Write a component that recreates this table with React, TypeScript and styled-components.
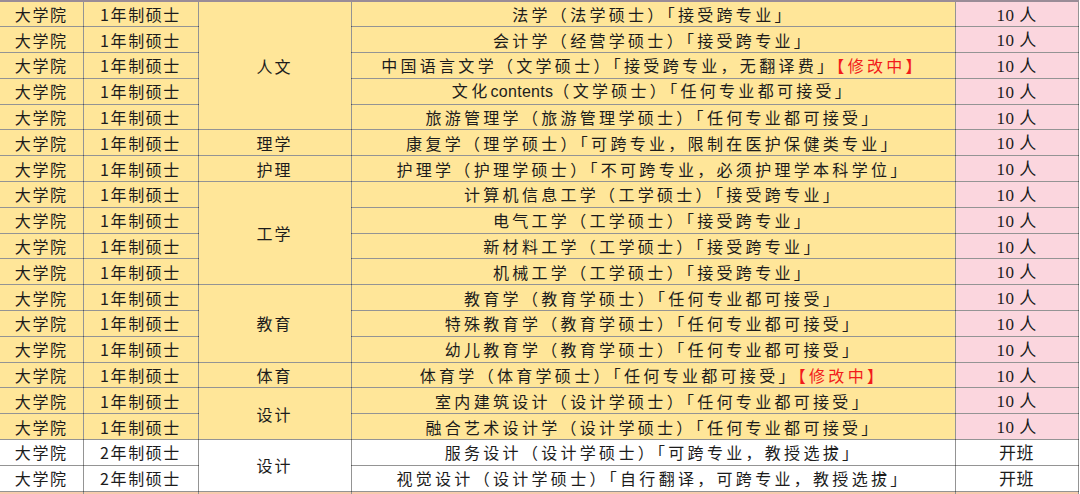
import React from "react";
import styled, { createGlobalStyle } from "styled-components";

const GlobalStyle = createGlobalStyle`
  html, body {
    margin: 0;
    padding: 0;
    background: #ffffff;
    overflow: hidden;
  }
  body {
    font-family: "Noto Sans CJK SC", "Noto Sans", sans-serif;
    color: #1c1c1c;
  }
`;

type Tone = "gold" | "white" | "peach";

const bg: Record<Tone, string> = {
  gold: "#ffe699",
  white: "#ffffff",
  peach: "#f8cbad",
};

const Sheet = styled.table`
  width: 1078px;
  table-layout: fixed;
  border-collapse: collapse;
  border-top: 2px solid #9a8c97;
`;

const Row = styled.tr<{ $tone: Tone }>`
  height: 25.8px;
  background: ${({ $tone }) => bg[$tone]};
`;

const Cell = styled.td<{ $spacing?: number }>`
  border: 1px solid rgba(0, 0, 0, 0.42);
  padding: 0;
  text-align: center;
  vertical-align: middle;
  font-size: 16px;
  line-height: 20px;
  letter-spacing: ${({ $spacing }) => $spacing ?? 1.6}px;
  white-space: nowrap;
  overflow: hidden;

  &:first-child {
    border-left: none;
  }
`;

const Quota = styled(Cell)<{ $pink: boolean }>`
  background: ${({ $pink }) => ($pink ? "#fbd6de" : "#ffffff")};
  font-family: "Liberation Serif", "Noto Sans CJK SC", serif;
  font-size: 17px;
  line-height: 16px;
  letter-spacing: 0.5px;
  padding-top: 3px;
`;

const Latin = styled.span`
  font-family: "Liberation Sans", "Noto Sans", sans-serif;
  letter-spacing: 0.3px;
`;

const Editing = styled.span`
  color: #f21b1b;
`;

interface Program {
  name: React.ReactNode;
  group?: { label: string; span: number };
  editing?: boolean;
}

const oneYear: Program[] = [
  { name: "法学（法学硕士）「接受跨专业」", group: { label: "人文", span: 5 } },
  { name: "会计学（经营学硕士）「接受跨专业」" },
  { name: "中国语言文学（文学硕士）「接受跨专业，无翻译费」", editing: true },
  {
    name: (
      <>
        文化<Latin>contents</Latin>（文学硕士）「任何专业都可接受」
      </>
    ),
  },
  { name: "旅游管理学（旅游管理学硕士）「任何专业都可接受」" },
  { name: "康复学（理学硕士）「可跨专业，限制在医护保健类专业」", group: { label: "理学", span: 1 } },
  { name: "护理学（护理学硕士）「不可跨专业，必须护理学本科学位」", group: { label: "护理", span: 1 } },
  { name: "计算机信息工学（工学硕士）「接受跨专业」", group: { label: "工学", span: 4 } },
  { name: "电气工学（工学硕士）「接受跨专业」" },
  { name: "新材料工学（工学硕士）「接受跨专业」" },
  { name: "机械工学（工学硕士）「接受跨专业」" },
  { name: "教育学（教育学硕士）「任何专业都可接受」", group: { label: "教育", span: 3 } },
  { name: "特殊教育学（教育学硕士）「任何专业都可接受」" },
  { name: "幼儿教育学（教育学硕士）「任何专业都可接受」" },
  { name: "体育学（体育学硕士）「任何专业都可接受」", group: { label: "体育", span: 1 }, editing: true },
  { name: "室内建筑设计（设计学硕士）「任何专业都可接受」", group: { label: "设计", span: 2 } },
  { name: "融合艺术设计学（设计学硕士）「任何专业都可接受」" },
];

const twoYear: Program[] = [
  { name: "服务设计（设计学硕士）「可跨专业，教授选拔」", group: { label: "设计", span: 2 } },
  { name: "视觉设计（设计学硕士）「自行翻译，可跨专业，教授选拔」" },
];

const renderRows = (list: Program[], degree: string, tone: Tone, quota: string) =>
  list.map((p, i) => (
    <Row key={degree + i} $tone={tone}>
      <Cell>大学院</Cell>
      <Cell>{degree}</Cell>
      {p.group && (
        <Cell rowSpan={p.group.span} $spacing={2}>
          {p.group.label}
        </Cell>
      )}
      <Cell $spacing={3.3}>
        {p.name}
        {p.editing && <Editing>【修改中】</Editing>}
      </Cell>
      <Quota $pink={tone === "gold"}>{quota}</Quota>
    </Row>
  ));

export default function App() {
  return (
    <>
      <GlobalStyle />
      <Sheet>
        <colgroup>
          <col style={{ width: 83 }} />
          <col style={{ width: 115 }} />
          <col style={{ width: 153 }} />
          <col style={{ width: 604 }} />
          <col style={{ width: 123 }} />
        </colgroup>
        <tbody>
          {renderRows(oneYear, "1年制硕士", "gold", "10 人")}
          {renderRows(twoYear, "2年制硕士", "white", "开班")}
          <Row $tone="peach">
            <Cell />
            <Cell />
            <Cell />
            <Cell />
            <Cell />
          </Row>
        </tbody>
      </Sheet>
    </>
  );
}
